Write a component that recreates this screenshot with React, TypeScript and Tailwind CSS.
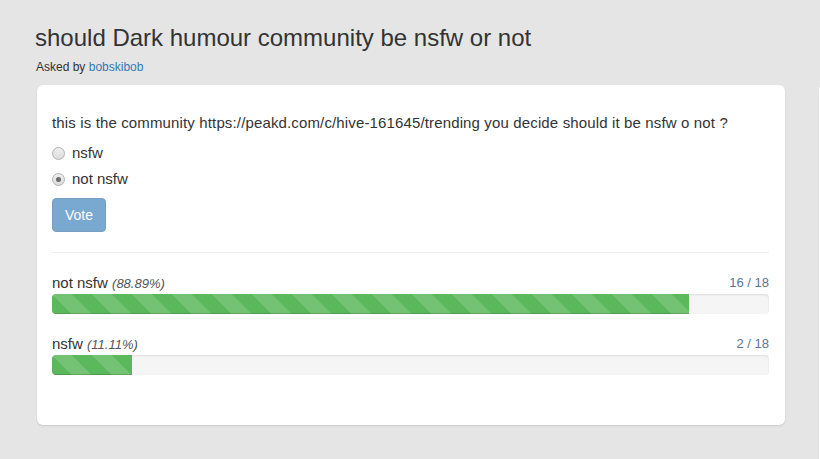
import React from "react";

const stripes =
  "bg-[#5cb85c] bg-[linear-gradient(45deg,rgba(255,255,255,.15)_25%,transparent_25%,transparent_50%,rgba(255,255,255,.15)_50%,rgba(255,255,255,.15)_75%,transparent_75%,transparent)] bg-[length:40px_40px] shadow-[inset_0_-1px_0_rgba(0,0,0,0.15)]";

function Radio({ checked }: { checked?: boolean }) {
  return (
    <span className="w-[13px] h-[13px] rounded-full border border-[#b3b3b3] bg-[linear-gradient(#eeeeee,#dcdcdc)] flex items-center justify-center shrink-0">
      {checked && <span className="w-[5px] h-[5px] rounded-full bg-[#6a6a6a]" />}
    </span>
  );
}

function Result({ label, pct, count, value }: { label: string; pct: string; count: string; value: number }) {
  return (
    <div>
      <div className="flex justify-between items-end h-5">
        <span className="leading-5 text-[15px]">
          {label} <em className="text-[13px] text-[#555]">({pct})</em>
        </span>
        <span className="leading-5 mb-[1px] text-[13px] text-[#5b7595]">{count}</span>
      </div>
      <div className="h-5 rounded-[4px] bg-[#f5f5f5] shadow-[inset_0_1px_2px_rgba(0,0,0,0.1)] overflow-hidden">
        <div className={`h-full ${stripes}`} style={{ width: `${value}%` }} />
      </div>
    </div>
  );
}

export default function App() {
  return (
    <div
      className="w-[820px] h-[459px] bg-[#e5e5e5] text-[#333] text-[14px] overflow-hidden"
      style={{ fontFamily: '"Liberation Sans", Arial, Helvetica, sans-serif' }}
    >
      <div className="pt-[25px] pl-[35px]">
        <h1 className="text-[24px] leading-[26px] font-normal">should Dark humour community be nsfw or not</h1>
      </div>
      <div className="pl-[36px] mt-[8px] text-[12px] leading-[17px]">
        Asked by <span className="text-[#337ab7]">bobskibob</span>
      </div>
      <div className="flex items-start gap-[34px] pl-[37px] mt-[9px]">
        <div className="w-[748px] shrink-0 bg-white rounded-[6px] shadow-[0_1px_2px_rgba(0,0,0,0.12)] pt-[28px] pl-[15px] pr-[16px] pb-[50px]">
          <p className="leading-5 text-[15px] tracking-[0.14px]">
            this is the community https://peakd.com/c/hive-161645/trending you decide should it be nsfw o not ?
          </p>
          <div className="mt-[10px] flex flex-col gap-[6px] text-[15px]">
            <label className="flex items-center gap-[7px] leading-5">
              <Radio />
              <span>nsfw</span>
            </label>
            <label className="flex items-center gap-[7px] leading-5">
              <Radio checked />
              <span>not nsfw</span>
            </label>
          </div>
          <button className="mt-[9px] h-[34px] px-3 rounded-[4px] border border-[#2e6da4] bg-[#337ab7] text-white opacity-65 leading-5">
            Vote
          </button>
          <hr className="mt-[20px] border-0 border-t border-[#eeeeee]" />
          <div className="mt-[21px] flex flex-col gap-[21px]">
            <Result label="not nsfw" pct="88.89%" count="16 / 18" value={88.89} />
            <Result label="nsfw" pct="11.11%" count="2 / 18" value={11.11} />
          </div>
        </div>
        <div className="w-[300px] shrink-0 h-[400px] bg-white rounded-[6px] -mt-[1px]" />
      </div>
    </div>
  );
}
